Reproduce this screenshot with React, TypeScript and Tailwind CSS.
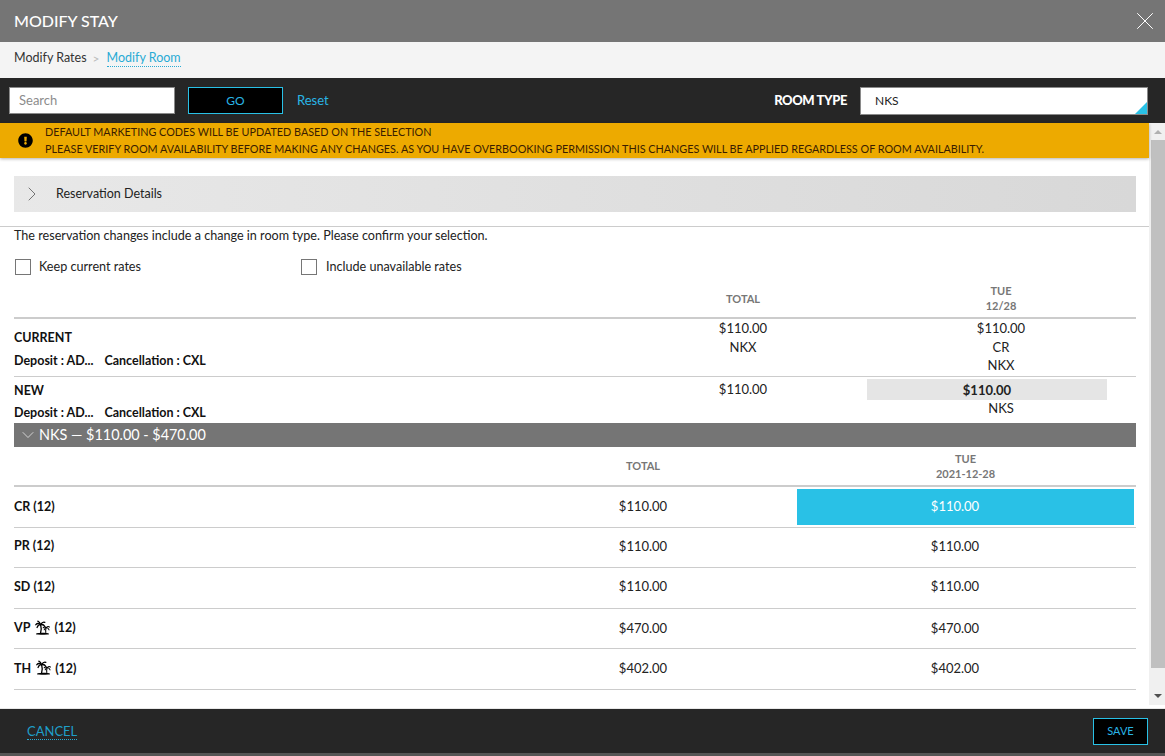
import React from 'react';
import { X, ChevronRight, ChevronDown } from 'lucide-react';
import { FaExclamationCircle } from 'react-icons/fa';

const topCols = 'grid grid-cols-[608px_242px_274px]';
const rateCols = 'grid grid-cols-[477px_304px_341px]';

const rates = [
  { code: 'CR', island: false, total: '$110.00', day: '$110.00', selected: true, h: 'h-[41px]', gap: 'ml-[3px]' },
  { code: 'PR', island: false, total: '$110.00', day: '$110.00', selected: false, h: 'h-[40px] pb-[2px]', gap: 'ml-[3px]' },
  { code: 'SD', island: false, total: '$110.00', day: '$110.00', selected: false, h: 'h-[41px] pb-[2px]', gap: 'ml-[3px]' },
  { code: 'VP', island: true, total: '$470.00', day: '$470.00', selected: false, h: 'h-[40px]', gap: 'ml-[4px]' },
  { code: 'TH', island: true, total: '$402.00', day: '$402.00', selected: false, h: 'h-[41px]', gap: 'ml-[4px]' },
];

// two palms on a little island
const IslandIcon = () => (
  <svg viewBox="0 0 16 16" className="w-[15px] h-[15px] ml-[5px] mb-[3px] text-black" fill="none" stroke="currentColor" strokeLinecap="round">
    <path d="M2 14.600c2-1.400 10-1.400 12 0c-2 1.100-10 1.100-12 0z" fill="currentColor" stroke="none" />
    <path d="M1.800 14.800h12.400" strokeWidth="1.200" />
    <g strokeWidth="1.400">
      <path d="M6 5Q7.200 9 6 13.500" />
      <path d="M6 5Q3 2.500.9 5" />
      <path d="M6 5Q3.500 4.800 2.200 8" />
      <path d="M6 5Q8 1.500 10.500 2.500" />
      <path d="M6 5Q9 4.200 10.500 7" />
      <path d="M6 5Q5 2 3 1.200" />
    </g>
    <g strokeWidth="1.100">
      <path d="M12 8Q11 10.500 11.500 13.500" />
      <path d="M12 8Q10.200 6.800 8.700 8.300" />
      <path d="M12 8Q14 6 15.500 7.500" />
      <path d="M12 8Q14 8.200 15 10.500" />
      <path d="M12 8Q10.500 8.500 9.800 10.500" />
    </g>
  </svg>
);

const Checkbox = ({ label, className }: { label: string; className: string }) => (
  <label className={`flex items-center ${className}`}>
    <span className="w-[16px] h-[16px] border border-[#767676] bg-white" />
    <span className="text-[12.6px] text-[#222]">{label}</span>
  </label>
);

export default function App() {
  return (
    <div className="w-[1165px] h-[756px] overflow-hidden flex flex-col bg-white text-[#111] font-['Lato','Liberation_Sans',sans-serif]">
      <div className="h-[42px] shrink-0 bg-[#757575] flex items-center justify-between pl-[14px] pr-[5px]">
        <h1 className="text-[16px] font-medium text-white">MODIFY STAY</h1>
        <X size={30} strokeWidth={0.8} className="text-white" />
      </div>

      <div className="h-[36px] shrink-0 bg-[#f4f4f4] flex items-center pl-[14px] pb-[3px] text-[12.5px] text-[#333]">
        <span>Modify Rates</span>
        <span className="ml-[6px] text-[#bbb] text-[12px]">&gt;</span>
        <span className="ml-[7px] text-[#29abd4] border-b border-dotted border-[#29abd4] leading-[16px]">Modify Room</span>
      </div>

      <div className="h-[45px] shrink-0 bg-[#262626] flex items-center pl-[9px] pr-[17px]">
        <input
          placeholder="Search"
          className="w-[166px] h-[27px] bg-white border border-[#8a8a8a] px-[9px] pb-[2px] text-[13px] outline-none placeholder:text-[#8c8c8c]"
        />
        <button className="ml-[13px] w-[95px] h-[27px] bg-black border border-[#29c1e6] text-[#29b5e6] text-[12px] pt-[1px]">GO</button>
        <a className="ml-[14px] text-[13px] text-[#29b5e6]">Reset</a>
        <span className="ml-auto text-[13px] font-black tracking-[-0.4px] text-white">ROOM TYPE</span>
        <div className="relative ml-[13px] w-[288px] h-[28px] bg-white border border-[#8a8a8a] flex items-center pl-[14px] text-[12px] text-[#222]">
          NKS
          <span className="absolute right-0 bottom-0 w-0 h-0 border-l-[12px] border-l-transparent border-b-[12px] border-b-[#29c1e6]" />
        </div>
      </div>

      <div className="flex-1 min-h-0 flex">
        <div className="w-[1149px] flex flex-col">
          <div className="h-[35px] bg-[#edaa00] flex items-center pl-[18px] pb-[2px] shadow-[0_1px_3px_rgba(0,0,0,0.3)] relative">
            <FaExclamationCircle size={15} className="text-black mt-[2px]" />
            <div className="ml-[12px] text-[10.8px] leading-[17px] text-[#3a1d00]">
              <div>DEFAULT MARKETING CODES WILL BE UPDATED BASED ON THE SELECTION</div>
              <div>PLEASE VERIFY ROOM AVAILABILITY BEFORE MAKING ANY CHANGES. AS YOU HAVE OVERBOOKING PERMISSION THIS CHANGES WILL BE APPLIED REGARDLESS OF ROOM AVAILABILITY.</div>
            </div>
          </div>

          <div className="mt-[18px] ml-[14px] mr-[13px] h-[36px] bg-gradient-to-r from-[#e8e8e8] to-[#d8d8d8] flex items-center pl-[6px]">
            <ChevronRight size={24} strokeWidth={0.8} className="text-[#555]" />
            <span className="ml-[12px] text-[12.5px] text-[#222]">Reservation Details</span>
          </div>

          <div className="mt-[14px] h-[20px] border-t border-[#ccc] pl-[14px] text-[12.6px] text-[#222] leading-[18px]">
            The reservation changes include a change in room type. Please confirm your selection.
          </div>

          <div className="pl-[14px] pr-[13px]">
            <div className="flex mt-[13px] h-[16px]">
              <Checkbox label="Keep current rates" className="w-[286px] ml-[1px] gap-[8px]" />
              <Checkbox label="Include unavailable rates" className="gap-[9px]" />
            </div>

            <div className={`${topCols} h-[36px] mt-[8px] border-b-2 border-[#ccc] text-[11px] font-bold text-[#777] text-center leading-[15px] items-end`}>
              <div />
              <div className="pb-[11px]">TOTAL</div>
              <div className="pb-[4px]">
                <div>TUE</div>
                <div>12/28</div>
              </div>
            </div>

            <div className={`${topCols} h-[58px] border-b border-[#ccc] text-[13px] leading-[18.5px] text-[#222]`}>
              <div className="text-[12.5px] leading-[18px] font-bold pt-[10px] text-[#111]">
                <div>CURRENT</div>
                <div className="mt-[5px] flex gap-[11px]">
                  <span>Deposit : AD...</span>
                  <span>Cancellation : CXL</span>
                </div>
              </div>
              <div className="text-center">
                <div>$110.00</div>
                <div>NKX</div>
              </div>
              <div className="text-center">
                <div>$110.00</div>
                <div>CR</div>
                <div>NKX</div>
              </div>
            </div>

            <div className={`${topCols} h-[46px] text-[13px] leading-[18px] text-[#222]`}>
              <div className="text-[12.5px] font-bold pt-[5px] text-[#111]">
                <div>NEW</div>
                <div className="mt-[4px] flex gap-[11px]">
                  <span>Deposit : AD...</span>
                  <span>Cancellation : CXL</span>
                </div>
              </div>
              <div className="text-center pt-[3px]">$110.00</div>
              <div className="text-center pt-[2px]">
                <div className="ml-[3px] w-[240px] h-[21px] bg-[#e5e5e5] font-bold flex items-center justify-center">$110.00</div>
                <div className="-mt-[1px]">NKS</div>
              </div>
            </div>

            <div className="h-[24px] bg-[#757575] flex items-center pl-[4px] text-[14.4px] text-white">
              <ChevronDown size={20} strokeWidth={0.8} className="text-white" />
              <span className="ml-[1px]">NKS — $110.00 - $470.00</span>
            </div>

            <div className={`${rateCols} h-[40px] border-b-2 border-[#ccc] text-[11px] font-bold text-[#777] text-center leading-[15px] items-end`}>
              <div />
              <div className="pb-[12px]">TOTAL</div>
              <div className="pb-[4px]">
                <div>TUE</div>
                <div>2021-12-28</div>
              </div>
            </div>

            {rates.map((r) => (
              <div key={r.code} className={`${rateCols} ${r.h} border-b border-[#ccc] items-center text-[13px] text-[#222]`}>
                <div className="font-bold text-[12.5px] text-[#111] flex items-center">
                  {r.code}
                  {r.island && <IslandIcon />}
                  <span className={r.gap}>(12)</span>
                </div>
                <div className="text-center">{r.total}</div>
                {r.selected ? (
                  <div className="mx-[2px] h-[36px] bg-[#29c1e6] text-white flex items-center justify-center pr-[21px]">{r.day}</div>
                ) : (
                  <div className="text-center pr-[21px]">{r.day}</div>
                )}
              </div>
            ))}
          </div>
        </div>

        <div className="w-[16px] h-[582px] bg-[#f0f0f0] flex flex-col items-center pl-[2px]">
          <span className="mt-[7px] w-0 h-0 border-x-[4px] border-x-transparent border-b-[4px] border-b-[#b0b0b0]" />
          <div className="mt-[6px] w-[14px] h-[528px] bg-[#c0c0c0]" />
          <span className="mt-[26px] w-0 h-0 border-x-[4px] border-x-transparent border-t-[4px] border-t-[#505050]" />
        </div>
      </div>

      <div className="h-[45px] shrink-0 bg-[#262626] border-t border-[#e8e8e8] flex items-center justify-between pl-[27px] pr-[17px]">
        <a className="text-[13px] text-[#1f9fc9] border-b border-dotted border-[#29abd4] leading-[16px]">CANCEL</a>
        <button className="w-[55px] h-[27px] bg-black border border-[#29c1e6] text-[#29b5e6] text-[11px]">SAVE</button>
      </div>
      <div className="h-[3px] shrink-0 bg-[#555]" />
    </div>
  );
}
